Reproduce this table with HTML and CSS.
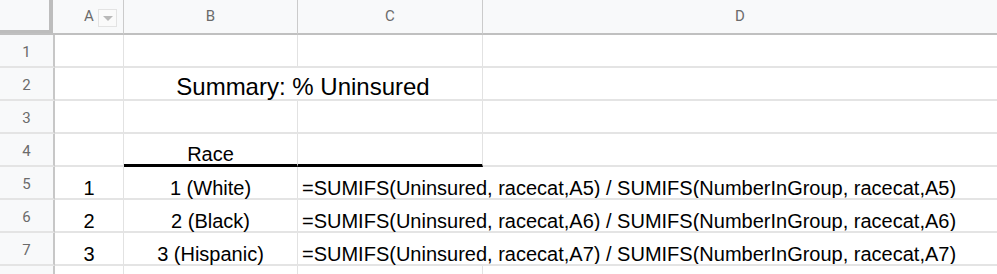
FILE: index.html
```html
<!DOCTYPE html>
<html lang="en">
<head>
<meta charset="utf-8">
<title>Summary: % Uninsured</title>
<link rel="stylesheet" href="styles.css">
</head>
<body>
<div class="sheet">
  <div class="corner"></div>
  <div class="colhdr colhdr-a">A<span class="filter"><svg width="10" height="5" viewBox="0 0 10 5"><path d="M0 0h10L5 5z" fill="#b9b9b9"/></svg></span></div>
  <div class="colhdr">B</div>
  <div class="colhdr">C</div>
  <div class="colhdr last">D</div>

  <div class="rowhdr">1</div>
  <div class="cell"></div><div class="cell"></div><div class="cell"></div><div class="cell last"></div>

  <div class="rowhdr">2</div>
  <div class="cell"></div><div class="cell merged title">Summary: % Uninsured</div><div class="cell last"></div>

  <div class="rowhdr">3</div>
  <div class="cell"></div><div class="cell"></div><div class="cell"></div><div class="cell last"></div>

  <div class="rowhdr">4</div>
  <div class="cell"></div><div class="cell center underline">Race</div><div class="cell underline"></div><div class="cell last"></div>

  <div class="rowhdr">5</div>
  <div class="cell center">1</div><div class="cell center">1 (White)</div><div class="cell spill">=SUMIFS(Uninsured, racecat,A5) / SUMIFS(NumberInGroup, racecat,A5)</div><div class="cell last"></div>

  <div class="rowhdr">6</div>
  <div class="cell center">2</div><div class="cell center">2 (Black)</div><div class="cell spill">=SUMIFS(Uninsured, racecat,A6) / SUMIFS(NumberInGroup, racecat,A6)</div><div class="cell last"></div>

  <div class="rowhdr">7</div>
  <div class="cell center">3</div><div class="cell center">3 (Hispanic)</div><div class="cell spill">=SUMIFS(Uninsured, racecat,A7) / SUMIFS(NumberInGroup, racecat,A7)</div><div class="cell last"></div>

  <div class="rowhdr">8</div>
  <div class="cell"></div><div class="cell"></div><div class="cell"></div><div class="cell last"></div>
</div>
</body>
</html>
```
FILE: styles.css
```css
* { box-sizing: border-box; }

html, body {
  margin: 0;
  padding: 0;
  background: #ffffff;
  overflow: hidden;
}

.sheet {
  display: grid;
  grid-template-columns: 55px 69px 174px 185px 514px;
  grid-template-rows: 35px repeat(8, 33px);
  width: 997px;
  background: #ffffff;
  font-family: "Liberation Sans", Arial, sans-serif;
  color: #000000;
}

.corner {
  background:
    linear-gradient(#bdbdbd, #bdbdbd) 49px 0 / 4px 33px no-repeat,
    linear-gradient(#bdbdbd, #bdbdbd) 0 30px / 53px 3px no-repeat,
    #f8f9fa;
  border-bottom: 2px solid #c0c0c0;
}

.colhdr {
  position: relative;
  display: flex;
  align-items: center;
  justify-content: center;
  background: #f8f9fa;
  border-bottom: 2px solid #c0c0c0;
  border-right: 1px solid #cbcbcb;
  font-family: Roboto, "Liberation Sans", Arial, sans-serif;
  font-size: 15px;
  color: #6b6b6b;
  padding-bottom: 1px;
}

.colhdr.last { border-right: none; }

.filter {
  position: absolute;
  left: 43px;
  top: 9px;
  width: 19px;
  height: 18px;
  border: 1px solid #e3e3e3;
  background: #fafafa;
  display: flex;
  align-items: center;
  justify-content: center;
}

.rowhdr {
  display: flex;
  align-items: center;
  justify-content: center;
  background: #f8f9fa;
  border-right: 2px solid #c7c7c7;
  border-bottom: 2px solid #e4e4e4;
  font-family: Roboto, "Liberation Sans", Arial, sans-serif;
  font-size: 15px;
  color: #6b6b6b;
  padding-top: 2px;
}

.cell {
  display: flex;
  align-items: flex-end;
  border-right: 1px solid #e2e2e2;
  border-bottom: 2px solid #e4e4e4;
  font-size: 20px;
  line-height: 20px;
  padding: 0 4px;
  white-space: nowrap;
  min-width: 0;
}

.cell.last { border-right: none; background: transparent; }

.cell.center { justify-content: center; }

.cell.merged {
  grid-column: span 2;
  justify-content: center;
}

.cell.title {
  font-size: 24px;
  line-height: 24px;
}

.cell.underline {
  border-bottom: 3px solid #000000;
}

.cell.spill {
  border-right: none;
  overflow: visible;
  padding-left: 4px;
}
```
